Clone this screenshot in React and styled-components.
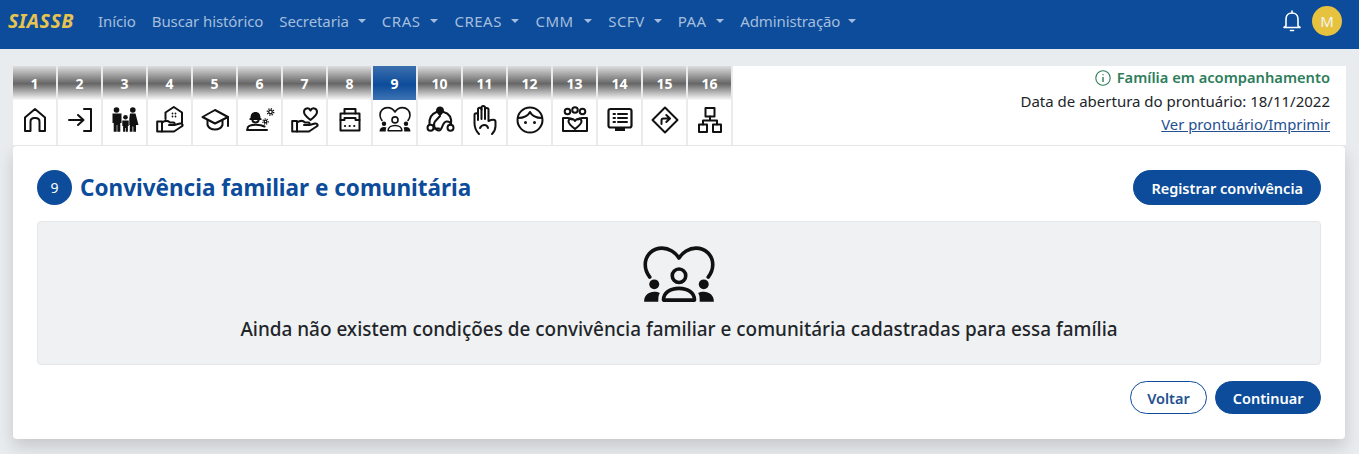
import React from 'react';
import styled, { createGlobalStyle } from 'styled-components';

const GlobalStyle = createGlobalStyle`
  html, body { margin: 0; padding: 0; background: #e9ecef; }
  body { font-family: "Noto Sans", "Open Sans", sans-serif; color: #212529; }
  * { box-sizing: border-box; }
`;

// label, has caret, letter spacing, caret margin
const NAV_ITEMS = [
  ['Início', false, -0.1, 0], ['Buscar histórico', false, -0.1, 0], ['Secretaria', true, -0.1, 9],
  ['CRAS', true, 0.5, 10], ['CREAS', true, 0.5, 9.5], ['CMM', true, 0.5, 10.5], ['SCFV', true, 0.5, 9],
  ['PAA', true, 0.5, 9.5], ['Administração', true, -0.1, 8],
];

const Stroke = styled.svg.attrs({ viewBox: '0 0 32 32', fill: 'none' })`
  width: ${(p) => p.$size || 32}px;
  height: ${(p) => p.$size || 32}px;
  stroke: #111;
  stroke-width: 2;
  stroke-linecap: round;
  stroke-linejoin: round;
  & .solid { fill: #111; stroke: none; }
`;

const Family = () => (
  <g strokeWidth="1.600">
    <path d="M3 16.500C1.500 14.500 1 12.500 1 11C1 6.500 4.500 3.600 8.500 3.600C11.500 3.600 14.500 5.500 16 8C17.500 5.500 20.500 3.600 23.500 3.600C27.500 3.600 31 6.500 31 11C31 12.500 30.500 14.500 29 16.500" />
    <circle cx="16" cy="15.900" r="3" />
    <path d="M9.100 26.700C9.100 23.500 12 21.500 16 21.500C20 21.500 22.900 23.500 22.900 26.700Z" />
    <circle className="solid" cx="5" cy="19.700" r="2.200" />
    <circle className="solid" cx="27" cy="19.700" r="2.200" />
    <path className="solid" d="M.5 27.400C.5 24.500 2.500 23 5 23C6 23 6.800 23.200 7.500 23.600C6.800 24.500 6.800 26 6.800 27.400Z" />
    <path className="solid" d="M31.500 27.400C31.500 24.500 29.500 23 27 23C26 23 25.200 23.200 24.500 23.600C25.200 24.500 25.200 26 25.200 27.400Z" />
  </g>
);

const ICONS = [
  <path d="M6 27V13.500L16 5L26 13.500V27H20.500V17.500C20.500 15.500 19 14 16.500 14H15.500C13 14 11.500 15.500 11.500 17.500V27Z" />,
  <>
    <path d="M5 16H19M14 11L19.500 16L14 21" />
    <path d="M20 5H27V27H20" />
  </>,
  <>
    <circle className="solid" cx="7.500" cy="6" r="2.800" />
    <circle className="solid" cx="16.500" cy="13.300" r="2.300" />
    <circle className="solid" cx="23.800" cy="6" r="2.800" />
    <path className="solid" d="M3.500 9.500H12.500V19H11.300V27.800H8.300V21H7.700V27.800H4.700V19H3.500Z" />
    <path className="solid" d="M13.300 16.500H19.700V22H18.900V27.800H16.800V24H16.200V27.800H14.100V22H13.300Z" />
    <path className="solid" d="M21 9.500H26.500L29.500 21H27V27.800H24.300V22.500H23.500V27.800H20.800V21H20.300V14.500Z" />
  </>,
  <>
    <path d="M11.500 15V8.500L19.800 3L28 8.500V19" />
    <path d="M3.200 17.500H8V27.500H3.200Z" />
    <path d="M8 18.500C11 16.500 14 16.500 16 18.500H19.500C21 18.500 21 21 19.500 21H15M20.500 21L26 19.500C28.500 19 29.500 21.500 27.500 22.500L20 27.500H8" />
    <circle className="solid" cx="18.500" cy="9.500" r=".9" /><circle className="solid" cx="21.500" cy="9.500" r=".9" />
    <circle className="solid" cx="18.500" cy="12.500" r=".9" /><circle className="solid" cx="21.500" cy="12.500" r=".9" />
  </>,
  <>
    <path d="M16 6L3.500 13L16 19.500L29 13Z" />
    <path d="M8.500 16.500V21C11 27 21 27 23.500 21V16.500" />
    <path d="M29 13V22" />
  </>,
  <>
    <path className="solid" d="M6.500 14C6.500 10 8.500 8 11.500 8C14.500 8 16.500 10 16.500 14L17.500 14.500V16H5.500V14.500Z" />
    <path d="M8.500 16.500C9 19 14 19 14.500 16.500" />
    <path d="M3.500 26V24.500C3.500 22 7 20.800 12 20.800C15 20.800 18 21.200 20.500 22.500M3 26H23" />
    <circle cx="26.500" cy="8" r="1.800" strokeWidth="1.300" />
    <circle cx="26.500" cy="8" r="3.200" strokeWidth="1.400" strokeDasharray="1.200 1.300" strokeLinecap="butt" />
    <circle cx="21.500" cy="17.500" r="1.300" strokeWidth="1.200" />
    <circle cx="21.500" cy="17.500" r="2.600" strokeWidth="1.300" strokeDasharray="1.100 1.100" strokeLinecap="butt" />
  </>,
  <>
    <path d="M21.500 16C17.500 13 15 11 15 8C15 4 20 3 21.500 6.500C23 3 28 4 28 8C28 11 25.500 13 21.500 16Z" />
    <path d="M3.200 17H8V27.500H3.200Z" />
    <path d="M8 18.500C11 16.500 14 16.500 16 18.500H19.500C21 18.500 21 21 19.500 21H15M20.500 21L26 19.500C28.500 19 29.500 21.500 27.500 22.500L20 27.500H8" />
  </>,
  <>
    <path d="M6.500 9.500H25.500V26.500H6.500Z" />
    <path d="M10.500 9.500V5H21.500V9.500M6.500 16H10.500V14H21.500V16H25.500" />
    <path d="M11 22H21" strokeDasharray=".1 4.500" strokeWidth="2.200" />
  </>,
  <Family />,
  <>
    <path d="M12.500 8C7.500 10 5 14 5.500 20M19.500 8C25 9.500 28 14 27 20.500M10 24.500H15" />
    <path className="solid" d="M12 6.500C12 4 14 2.500 16 2.500C18 2.500 20 4 20 6.500C20 8.500 17.500 10.500 16 12.500C14.500 10.500 12 8.500 12 6.500Z" />
    <circle cx="6.500" cy="23.700" r="3" /><circle cx="26.500" cy="23.700" r="3" />
    <path d="M16 12L11 17.500C8.500 21 11 26.500 15 26.500C18.500 26.500 18 18 22.500 17.500C24.500 17.300 26.500 18.500 27 20.500" />
  </>,
  <>
    <path d="M10 30C7 27 5.500 23 5.500 19V11C5.500 8.500 9 8.500 9 11V5.500C9 3 12.500 3 12.500 5.500V3.800C12.500 1.500 16 1.500 16 3.800V5.500C16 3.500 19.500 3.500 19.500 5.500V17C23 15.500 26.500 15 26.500 18V22C26.500 26 25 28 23 30" />
    <path d="M9 11V16M12.500 5V15M16 5V15M11 24C13 20 18 20 19 24" />
  </>,
  <>
    <circle cx="16" cy="16" r="12.500" />
    <path d="M4 14C10 14 14 12 16 8C18 12 22 14 28 14" />
    <circle className="solid" cx="11.500" cy="18.500" r="1.500" /><circle className="solid" cx="20.500" cy="18.500" r="1.500" />
  </>,
  <>
    <circle cx="8.500" cy="7.500" r="2.800" /><circle cx="16" cy="6" r="2.800" /><circle cx="23.500" cy="7.500" r="2.800" />
    <path d="M4 27V14H9C11.500 14 12.500 15 13 15.500M28 14V27H4M28 14H23C20.500 14 19.500 15 19 15.500" />
    <path d="M16 25C11.500 21.500 9.500 19.500 9.500 17.500C9.500 14.500 14 13.500 16 17C18 13.500 22.500 14.500 22.500 17.500C22.500 19.500 20.500 21.500 16 25Z" />
  </>,
  <>
    <rect x="4.500" y="5" width="23" height="18.500" rx="2" strokeWidth="2.200" />
    <path d="M9.500 10H11M14 10H23M9.500 14H11M14 14H23M9.500 18H11M14 18H23" />
    <path className="solid" d="M11 23H21V27H11Z" />
  </>,
  <>
    <path d="M16 3.500L28.500 16L16 28.500L3.500 16Z" />
    <path d="M12.500 20V16.500C12.500 15 13.500 14.500 14.500 14.500H20.500M17.300 11L21 14.500L17.300 18" />
  </>,
  <>
    <path d="M11.500 4H20.500V12.500H11.500Z" />
    <path d="M5 20.500H13V28H5ZM19 20.500H27V28H19Z" />
    <path d="M16 12.500V16.500M9 20.500V16.500H23V20.500" />
  </>,
];

const Page = styled.div`
  width: 1359px;
  min-height: 454px;
  overflow: hidden;
`;

const Navbar = styled.nav`
  height: 49px;
  background: #0c4c9a;
  display: flex;
  align-items: center;
  padding: 0 32px 8px 8px;
`;

const Brand = styled.span`
  color: #e6c44f;
  font-style: italic;
  font-weight: 700;
  font-size: 19.500px;
  letter-spacing: 0.500px;
  margin-right: 16px;
  width: 66px;
`;

const NavLink = styled.span`
  color: #a5bedd;
  font-size: 15px;
  padding: 0 8px;
  white-space: nowrap;
  display: flex;
  align-items: center;
  letter-spacing: ${(p) => p.$spacing}px;
  ${(p) => p.$caret && `
    &::after {
      content: '';
      margin-left: ${p.$caret}px;
      border-top: 4.500px solid currentColor;
      border-left: 4.500px solid transparent;
      border-right: 4.500px solid transparent;
    }
  `}
`;

const NavRight = styled.div`
  margin-left: auto;
  margin-right: -15px;
  display: flex;
  align-items: center;
  gap: 10px;
`;

const Avatar = styled.span`
  width: 30px;
  height: 30px;
  border-radius: 50%;
  background: #e6c23f;
  color: #f4f4f4;
  font-size: 15px;
  display: flex;
  align-items: center;
  justify-content: center;
`;

const Content = styled.main`
  padding: 17px 13px 0;
`;

const TabRow = styled.div`
  display: flex;
  height: 79px;
  background: #fff;
`;

const Tabs = styled.div`
  display: flex;
  background: #e9ecef;
`;

const Tab = styled.div`
  width: 45px;
  padding-right: 2px;
  display: flex;
  flex-direction: column;
`;

const TabNumber = styled.div`
  height: 34px;
  display: flex;
  align-items: center;
  justify-content: center;
  color: #fff;
  font-weight: 700;
  font-size: 14px;
  background: ${(p) => (p.$active
    ? 'linear-gradient(180deg, #3c6fae 0%, #0c4c9a 55%, #3f74b5 100%)'
    : 'linear-gradient(180deg, #dedede 0%, #666 52%, #fafafa 100%)')};
`;

const TabIcon = styled.div`
  flex: 1;
  background: #fff;
  padding-bottom: 5px;
  display: flex;
  align-items: center;
  justify-content: center;
`;

const Info = styled.div`
  flex: 1;
  background: #fff;
  padding-right: 16px;
  display: flex;
  flex-direction: column;
  align-items: flex-end;
  font-size: 15px;
  line-height: 23.500px;
`;

const Status = styled.div`
  color: #2e7d5b;
  font-size: 14.700px;
  font-weight: 600;
  display: flex;
  align-items: center;
  gap: 6px;
`;

const InfoLink = styled.a`
  color: #24508f;
  font-size: 14.800px;
  text-decoration: underline;
`;

const Card = styled.section`
  margin: 1px 1px 0 0;
  background: #fff;
  height: 293px;
  border-radius: 4px;
  padding: 24px;
  display: flex;
  flex-direction: column;
  box-shadow: 0 8px 16px rgba(0, 0, 0, 0.15);
`;

const CardHead = styled.header`
  display: flex;
  align-items: center;
  gap: 8px;
  height: 35px;
`;

const StepBadge = styled.span`
  width: 35px;
  height: 35px;
  border-radius: 50%;
  background: #0c4c9a;
  color: #fff;
  font-size: 14px;
  display: flex;
  align-items: center;
  justify-content: center;
`;

const Title = styled.h2`
  margin: 0;
  color: #0c4c9a;
  font-size: 22.500px;
  font-weight: 700;
  flex: 1;
`;

const Button = styled.button`
  height: ${(p) => p.$h || 33}px;
  border-radius: 18px;
  padding: 0 ${(p) => p.$pad || 16.5}px;
  font-family: inherit;
  font-size: 14.500px;
  font-weight: 600;
  border: 1px solid #0c4c9a;
  background: ${(p) => (p.$outline ? '#fff' : '#0c4c9a')};
  color: ${(p) => (p.$outline ? '#24508f' : '#fff')};
`;

const Empty = styled.div`
  margin-top: 16px;
  height: 144px;
  background: #eff1f3;
  border: 1px solid #e4e6e9;
  border-radius: 4px;
  display: flex;
  flex-direction: column;
  align-items: center;
  padding-top: 18px;
`;

const EmptyText = styled.p`
  margin: 4px 0 0;
  font-size: 18.930px;
  font-weight: 500;
  color: #212529;
`;

const Footer = styled.footer`
  margin-top: 16px;
  display: flex;
  justify-content: flex-end;
  gap: 8px;
`;

export default function App() {
  return (
    <Page>
      <GlobalStyle />
      <Navbar>
        <Brand>SIASSB</Brand>
        {NAV_ITEMS.map(([label, caret, spacing, margin]) => (
          <NavLink key={label} $caret={caret ? margin : 0} $spacing={spacing}>{label}</NavLink>
        ))}
        <NavRight>
          <svg width="20" height="22" viewBox="0 0 20 22" fill="none" stroke="#fff" strokeWidth="1.600" strokeLinejoin="round">
            <path d="M4 16V9C4 5.500 6.500 3 10 3C13.500 3 16 5.500 16 9V16L18 17.500H2Z" />
            <path d="M8.500 20.500H11.500M10 1V3" strokeLinecap="round" />
          </svg>
          <Avatar>M</Avatar>
        </NavRight>
      </Navbar>
      <Content>
        <TabRow>
          <Tabs>
            {ICONS.map((icon, i) => (
              <Tab key={i}>
                <TabNumber $active={i === 8}>{i + 1}</TabNumber>
                <TabIcon><Stroke>{icon}</Stroke></TabIcon>
              </Tab>
            ))}
          </Tabs>
          <Info>
            <Status>
              <svg width="16" height="16" viewBox="0 0 16 16" fill="none" stroke="#2e7d5b" strokeWidth="1.100">
                <circle cx="8" cy="8" r="7.200" />
                <path d="M8 7V12M8 4.200V5.200" strokeWidth="1.400" />
              </svg>
              Família em acompanhamento
            </Status>
            <div>Data de abertura do prontuário: 18/11/2022</div>
            <InfoLink>Ver prontuário/Imprimir</InfoLink>
          </Info>
        </TabRow>
        <Card>
          <CardHead>
            <StepBadge>9</StepBadge>
            <Title>Convivência familiar e comunitária</Title>
            <Button $h={35} $pad={17}>Registrar convivência</Button>
          </CardHead>
          <Empty>
            <Stroke $size={72}><Family /></Stroke>
            <EmptyText>Ainda não existem condições de convivência familiar e comunitária cadastradas para essa família</EmptyText>
          </Empty>
          <Footer>
            <Button $outline>Voltar</Button>
            <Button>Continuar</Button>
          </Footer>
        </Card>
      </Content>
    </Page>
  );
}
